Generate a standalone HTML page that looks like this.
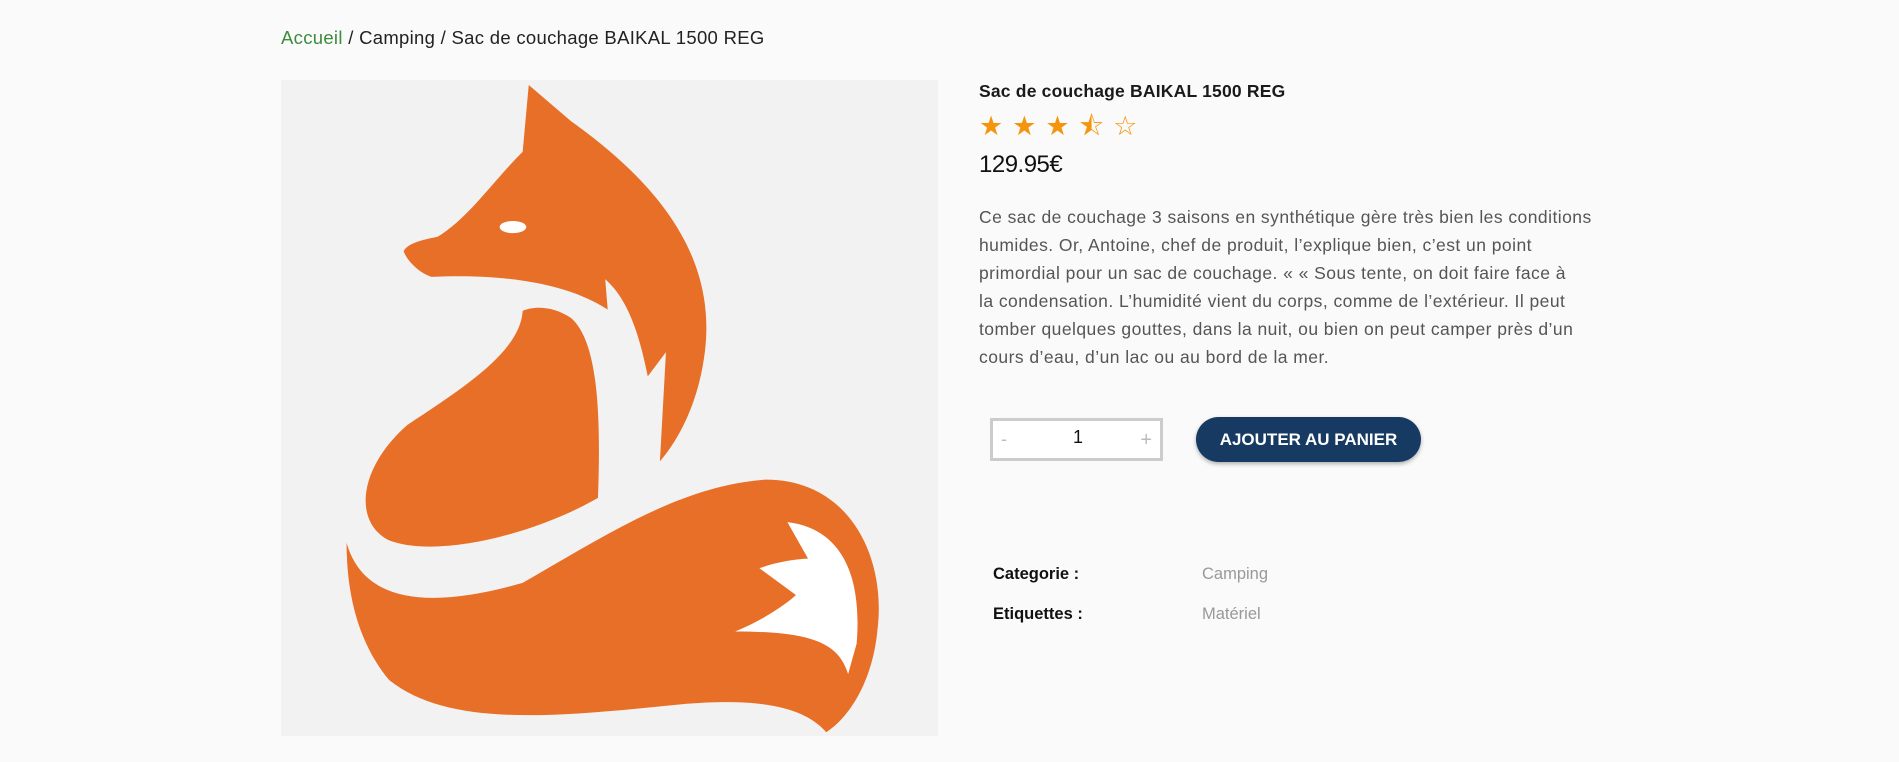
<!DOCTYPE html>
<html><head><meta charset="utf-8"><style>
*{margin:0;padding:0;box-sizing:border-box}
body{width:1899px;height:762px;background:#fafafa;font-family:"Liberation Sans",sans-serif;position:relative;overflow:hidden;color:#222}
.a{position:absolute;white-space:nowrap}
.bc{left:281px;top:27px;font-size:18.5px;color:#222;letter-spacing:0.3px}
.bc span{color:#3d8b3d}
.title{left:979px;top:81px;font-size:17.5px;font-weight:bold;color:#1a1a1a;letter-spacing:0.2px}
.price{left:979px;top:151px;font-size:24px;color:#111;letter-spacing:-0.5px}
.desc{left:979px;top:203px;font-size:17.5px;line-height:28px;color:#555;letter-spacing:0.45px}
.qty{left:990px;top:418px;width:173px;height:43px;border:3px solid #ccc;background:#fff}
.btn{left:1196px;top:417px;width:225px;height:45px;border-radius:23px;background:#173a63;color:#fff;font-weight:bold;font-size:17px;text-align:center;line-height:45px;box-shadow:0 2px 4px rgba(0,0,0,.3)}
.lab{font-size:16.5px;font-weight:bold;color:#111}
.val{font-size:16.5px;color:#999}
</style></head><body>
<div class="a bc"><span>Accueil</span> / Camping / Sac de couchage BAIKAL 1500 REG</div>
<svg class="a" style="left:281px;top:80px" width="657" height="656" viewBox="231 66 541 540">
<rect x="231" y="66" width="541" height="540" fill="#f2f2f2"/>
<g fill="#e86f27">
<path d="M435,70 L470,100 C540,150 590,210 580,290 C575,330 560,360 543,380 L548,290 L533,310 C525,270 515,245 498,230 L500,255 C470,235 420,225 355,228 C345,225 335,215 332,207 C335,200 350,197 360,195 C385,180 405,150 430,125 Z"/>
<path d="M430,256 C428,290 380,320 335,350 C295,385 290,430 320,445 C360,460 440,440 492,410 C495,330 490,280 470,262 C455,252 440,252 430,256 Z" />
<path d="M285,447 C300,500 360,500 430,480 C500,440 560,400 630,395 C700,395 730,460 722,520 C718,560 700,590 680,603 C660,580 620,575 560,580 C460,590 370,600 320,560 C295,530 285,490 285,447 Z"/>
</g>
<path fill="#fff" d="M648,430 C690,435 710,470 705,530 L698,555 C690,530 670,520 605,520 C630,510 650,495 655,490 L625,468 C640,462 660,460 665,460 Z"/>
<ellipse cx="422" cy="187" rx="11" ry="5" fill="#fff"/>
</svg>
<div class="a title">Sac de couchage BAIKAL 1500 REG</div>
<div class="a" style="left:979px;top:107px;font-size:27px;color:#f5950d;letter-spacing:9px">★★★⯪☆</div>
<div class="a price">129.95€</div>
<div class="a desc">Ce sac de couchage 3 saisons en synthétique gère très bien les conditions<br>humides. Or, Antoine, chef de produit, l’explique bien, c’est un point<br>primordial pour un sac de couchage. « « Sous tente, on doit faire face à<br>la condensation. L’humidité vient du corps, comme de l’extérieur. Il peut<br>tomber quelques gouttes, dans la nuit, ou bien on peut camper près d’un<br>cours d’eau, d’un lac ou au bord de la mer.</div>
<div class="a qty"><span style="position:absolute;left:8px;top:8px;color:#bbb;font-size:18px">-</span><span style="position:absolute;left:80px;top:6px;font-size:18px;color:#111">1</span><span style="position:absolute;right:8px;top:8px;color:#bbb;font-size:20px">+</span></div>
<div class="a btn">AJOUTER AU PANIER</div>
<div class="a lab" style="left:993px;top:565px">Categorie :</div>
<div class="a val" style="left:1202px;top:565px">Camping</div>
<div class="a lab" style="left:993px;top:605px">Etiquettes :</div>
<div class="a val" style="left:1202px;top:605px">Matériel</div>
</body></html>
